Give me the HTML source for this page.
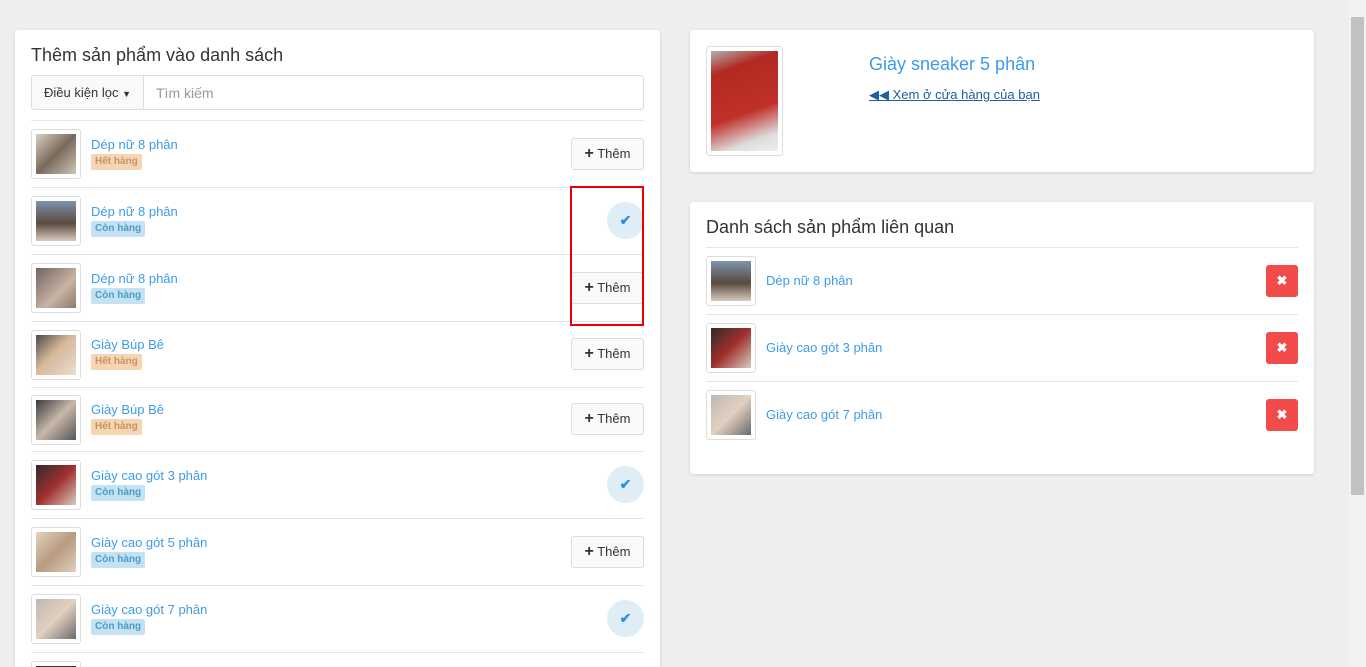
<!DOCTYPE html>
<html style="width:1366px;height:667px;overflow:hidden"><head><meta charset="utf-8"><style>
*{box-sizing:border-box;margin:0;padding:0}
body{width:1366px;height:667px;overflow:hidden;background:#eeeeee;font-family:"Liberation Sans",sans-serif;position:relative;color:#333}
.panel{position:absolute;background:#fff;border-radius:3px;box-shadow:0 1px 3px rgba(0,0,0,.12)}
h2{font-weight:normal;font-size:18px;color:#333;position:absolute}
.thumb{position:absolute;width:50px;height:50px;border:1px solid #ddd;border-radius:3px;background:#fff;padding:4px}
.thumb div{width:100%;height:100%}
.name{position:absolute;color:#3e9be9;font-size:13px}
.badge{position:absolute;font-size:10px;font-weight:bold;padding:2px 4px;border-radius:2px;height:16px;line-height:12px}
.out{background:#f6d5b0;color:#c4956a}
.in{background:#c4e2f2;color:#4a9cc8}
.btn{position:absolute;left:571px;width:73px;height:32px;border:1px solid #ddd;border-radius:3px;background:#fafafa;font-size:13px;color:#333;text-align:center;line-height:30px}
.btn b{font-size:16px}
.chk{position:absolute;left:607px;width:37px;height:37px;border-radius:50%;background:#dfedf7;color:#2e8fe6;text-align:center;line-height:37px;font-size:14px;font-weight:bold}
.sep{position:absolute;height:1px;background:#e5e5e5}
.del{position:absolute;left:1266px;width:32px;height:32px;border-radius:3px;background:#f34a4a;color:#fff;text-align:center;line-height:32px;font-size:13px;font-weight:bold}
</style></head><body>
<div class="panel" style="left:15px;top:30px;width:645px;height:650px"></div>
<h2 style="left:31px;top:45px">Thêm sản phẩm vào danh sách</h2>
<div style="position:absolute;left:31px;top:75px;width:613px;height:35px;border:1px solid #ddd;border-radius:3px"></div>
<div style="position:absolute;left:31px;top:75px;width:113px;height:35px;border:1px solid #ddd;border-radius:3px 0 0 3px;background:#f9f9f9;font-size:13px;line-height:33px;text-align:center">Điều kiện lọc <span style="font-size:9px">▼</span></div>
<div style="position:absolute;left:156px;top:85px;font-size:14px;color:#999">Tìm kiếm</div>
<div class="sep" style="left:31px;top:120px;width:613px"></div>

<div class="thumb" style="left:31px;top:129px"><div style="background:linear-gradient(135deg,#d8cfc3,#7a6a5c 50%,#cfc4b8)"></div></div>
<div class="name" style="left:91px;top:137px">Dép nữ 8 phân</div><div class="badge out" style="left:91px;top:154px">Hết hàng</div>
<div class="btn" style="top:138px"><b>+</b> Thêm</div>
<div class="sep" style="left:31px;top:187px;width:613px"></div>

<div class="thumb" style="left:31px;top:196px"><div style="background:linear-gradient(180deg,#7d94ad,#5a4a40 55%,#d8cbbd)"></div></div>
<div class="name" style="left:91px;top:204px">Dép nữ 8 phân</div><div class="badge in" style="left:91px;top:221px">Còn hàng</div>
<div class="chk" style="top:202px">✔</div>
<div class="sep" style="left:31px;top:254px;width:613px"></div>

<div class="thumb" style="left:31px;top:263px"><div style="background:linear-gradient(135deg,#6d6560,#c9b3a3 60%,#8a7a70)"></div></div>
<div class="name" style="left:91px;top:271px">Dép nữ 8 phân</div><div class="badge in" style="left:91px;top:288px">Còn hàng</div>
<div class="btn" style="top:272px"><b>+</b> Thêm</div>
<div class="sep" style="left:31px;top:321px;width:613px"></div>

<div class="thumb" style="left:31px;top:330px"><div style="background:linear-gradient(135deg,#4a4a4a,#d7b89a 45%,#e8ddd2)"></div></div>
<div class="name" style="left:91px;top:337px">Giày Búp Bê</div><div class="badge out" style="left:91px;top:354px">Hết hàng</div>
<div class="btn" style="top:338px"><b>+</b> Thêm</div>
<div class="sep" style="left:31px;top:387px;width:613px"></div>

<div class="thumb" style="left:31px;top:395px"><div style="background:linear-gradient(135deg,#3a3a3a,#c9b8aa 50%,#555)"></div></div>
<div class="name" style="left:91px;top:402px">Giày Búp Bê</div><div class="badge out" style="left:91px;top:419px">Hết hàng</div>
<div class="btn" style="top:403px"><b>+</b> Thêm</div>
<div class="sep" style="left:31px;top:451px;width:613px"></div>

<div class="thumb" style="left:31px;top:460px"><div style="background:linear-gradient(135deg,#2e2a2a,#a0302e 50%,#d8ccc0)"></div></div>
<div class="name" style="left:91px;top:468px">Giày cao gót 3 phân</div><div class="badge in" style="left:91px;top:485px">Còn hàng</div>
<div class="chk" style="top:466px">✔</div>
<div class="sep" style="left:31px;top:518px;width:613px"></div>

<div class="thumb" style="left:31px;top:527px"><div style="background:linear-gradient(135deg,#e5d3c0,#b89a80 50%,#e0cfbf)"></div></div>
<div class="name" style="left:91px;top:535px">Giày cao gót 5 phân</div><div class="badge in" style="left:91px;top:552px">Còn hàng</div>
<div class="btn" style="top:536px"><b>+</b> Thêm</div>
<div class="sep" style="left:31px;top:585px;width:613px"></div>

<div class="thumb" style="left:31px;top:594px"><div style="background:linear-gradient(135deg,#bcb8b4,#e3d0c0 50%,#6a6a6a)"></div></div>
<div class="name" style="left:91px;top:602px">Giày cao gót 7 phân</div><div class="badge in" style="left:91px;top:619px">Còn hàng</div>
<div class="chk" style="top:600px">✔</div>
<div class="sep" style="left:31px;top:652px;width:613px"></div>
<div class="thumb" style="left:31px;top:661px;height:6px;border-bottom:none"><div style="background:#333;height:2px"></div></div>

<div style="position:absolute;left:570px;top:186px;width:74px;height:140px;border:2px solid #e00"></div>

<div class="panel" style="left:690px;top:30px;width:624px;height:142px"></div>
<div class="thumb" style="left:706px;top:46px;width:77px;height:110px"><div style="background:linear-gradient(160deg,#b0b0b0 0%,#b22a22 20%,#c0302a 60%,#ddd 85%,#eee)"></div></div>
<div style="position:absolute;left:869px;top:54px;font-size:18px;color:#3e9be9">Giày sneaker 5 phân</div>
<div style="position:absolute;left:869px;top:87px;font-size:13px;color:#1e5fa0;text-decoration:underline">◀◀ Xem ở cửa hàng của bạn</div>

<div class="panel" style="left:690px;top:202px;width:624px;height:272px"></div>
<h2 style="left:706px;top:217px">Danh sách sản phẩm liên quan</h2>
<div class="sep" style="left:706px;top:247px;width:592px"></div>
<div class="thumb" style="left:706px;top:256px"><div style="background:linear-gradient(180deg,#7d94ad,#5a4a40 55%,#d8cbbd)"></div></div>
<div class="name" style="left:766px;top:273px">Dép nữ 8 phân</div><div class="del" style="top:265px">✖</div>
<div class="sep" style="left:706px;top:314px;width:592px"></div>
<div class="thumb" style="left:706px;top:323px"><div style="background:linear-gradient(135deg,#2e2a2a,#a0302e 50%,#d8ccc0)"></div></div>
<div class="name" style="left:766px;top:340px">Giày cao gót 3 phân</div><div class="del" style="top:332px">✖</div>
<div class="sep" style="left:706px;top:381px;width:592px"></div>
<div class="thumb" style="left:706px;top:390px"><div style="background:linear-gradient(135deg,#bcb8b4,#e3d0c0 50%,#6a6a6a)"></div></div>
<div class="name" style="left:766px;top:407px">Giày cao gót 7 phân</div><div class="del" style="top:399px">✖</div>

<div style="position:absolute;left:1349px;top:0;width:17px;height:667px;background:#f1f1f1"></div>
<div style="position:absolute;left:1351px;top:17px;width:13px;height:478px;background:#c1c1c1"></div>
</body></html>
